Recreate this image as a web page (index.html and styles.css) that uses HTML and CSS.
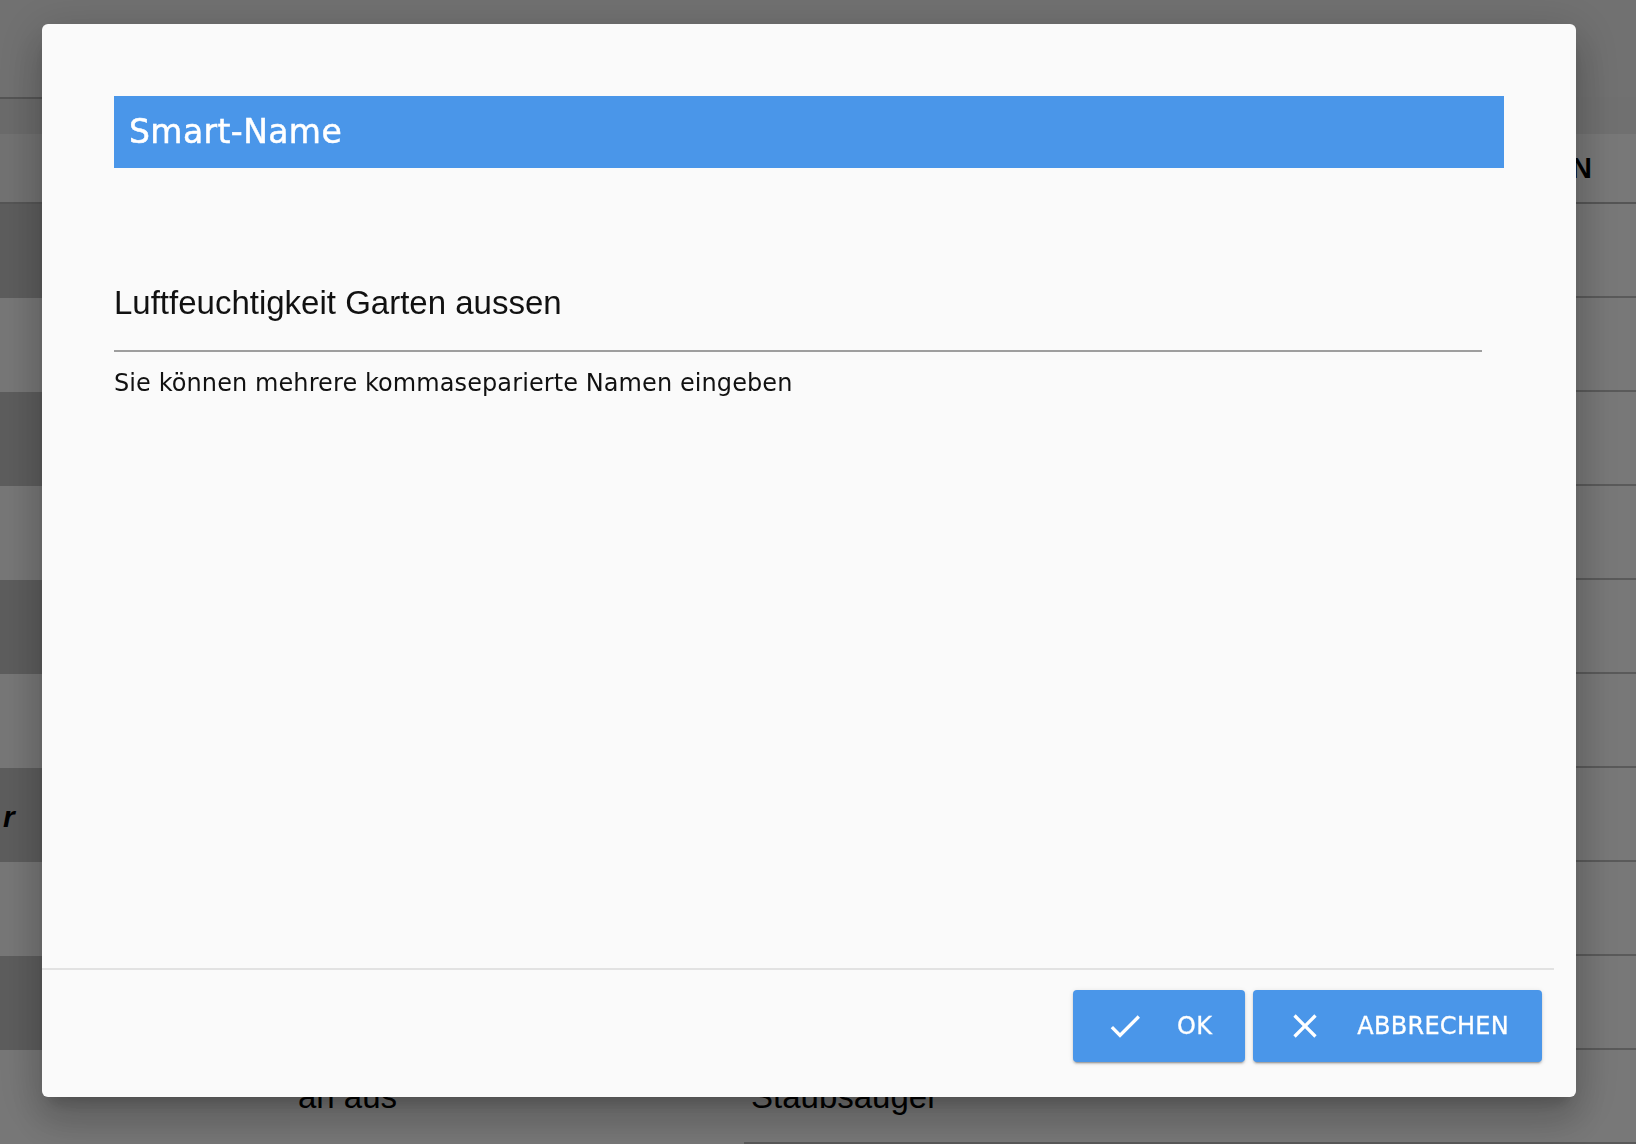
FILE: index.html
```html
<!DOCTYPE html>
<html lang="de">
<head>
<meta charset="utf-8">
<title>Smart-Name</title>
<link rel="stylesheet" href="styles.css">
</head>
<body>
<div class="page">
  <div class="appbar"></div>
  <div class="toolbar"><div class="tb-left"></div><div class="tb-right"></div></div>
  <div class="thead">
    <div class="th th-first"></div>
    <div class="th th-rest">SMART-NAMEN</div>
  </div>
  <div class="rows">
    <div class="row odd"><div class="c c1"></div><div class="c c2"></div><div class="c c3"></div><div class="c c4"></div></div>
    <div class="row"><div class="c c1"></div><div class="c c2"></div><div class="c c3"></div><div class="c c4"></div></div>
    <div class="row odd"><div class="c c1"></div><div class="c c2"></div><div class="c c3"></div><div class="c c4"></div></div>
    <div class="row"><div class="c c1"></div><div class="c c2"></div><div class="c c3"></div><div class="c c4"></div></div>
    <div class="row odd"><div class="c c1"></div><div class="c c2"></div><div class="c c3"></div><div class="c c4"></div></div>
    <div class="row"><div class="c c1"></div><div class="c c2"></div><div class="c c3"></div><div class="c c4"></div></div>
    <div class="row odd"><div class="c c1"><span class="group">r</span></div><div class="c c2"></div><div class="c c3"></div><div class="c c4"></div></div>
    <div class="row"><div class="c c1"></div><div class="c c2"></div><div class="c c3"></div><div class="c c4"></div></div>
    <div class="row odd"><div class="c c1"></div><div class="c c2"></div><div class="c c3"></div><div class="c c4"></div></div>
    <div class="row last"><div class="c c1"></div><div class="c c2 cell-text">an aus</div><div class="c c3 cell-text">Staubsauger</div><div class="c c4"></div></div>
  </div>
</div>

<div class="backdrop"></div>

<div class="dialog">
  <div class="dialog-body">
    <div class="dialog-title">Smart-Name</div>
    <div class="field">
      <div class="field-input">Luftfeuchtigkeit Garten aussen</div>
      <div class="field-helper">Sie können mehrere kommaseparierte Namen eingeben</div>
    </div>
  </div>
  <div class="dialog-divider"></div>
  <div class="dialog-actions">
    <button class="btn">
      <svg class="btn-icon" viewBox="0 0 24 24"><path d="M9 16.17L4.83 12l-1.42 1.41L9 19 21 7l-1.41-1.41z"/></svg>
      <span class="btn-label">OK</span>
    </button>
    <button class="btn">
      <svg class="btn-icon" viewBox="0 0 24 24"><path d="M19 6.41L17.59 5 12 10.59 6.41 5 5 6.41 10.59 12 5 17.59 6.41 19 12 13.41 17.59 19 19 17.59 13.41 12z"/></svg>
      <span class="btn-label">Abbrechen</span>
    </button>
  </div>
</div>
</body>
</html>
```
FILE: styles.css
```css
html, body {
  margin: 0;
  padding: 0;
  height: 100%;
  overflow: hidden;
}

body {
  font-family: "Liberation Sans", Arial, sans-serif;
  background: #eeeeee;
}

/* underlying page */
.page {
  width: 1636px;
  height: 1144px;
  display: flex;
  flex-direction: column;
}

.appbar {
  height: 98px;
  background: #e2e2e2;
}

.toolbar {
  height: 38px;
  display: flex;
}

.tb-left {
  width: 300px;
  background: #d6d6d6;
  border-top: 2px solid #aaaaaa;
}

.tb-right {
  flex: 1;
  background: #e0e0e0;
}

.thead {
  height: 68px;
  display: flex;
  border-bottom: 2px solid #ababab;
}

.th-first {
  width: 290px;
  background: #e4e4e4;
}

.th-rest {
  flex: 1;
  background: #f0f0f0;
  text-align: right;
  padding-right: 44px;
  font-family: "Liberation Sans", Arial, sans-serif;
  font-weight: bold;
  font-size: 29px;
  line-height: 68px;
  color: #000;
}

.rows {
  display: flex;
  flex-direction: column;
}

.row {
  height: 94px;
  display: flex;
}

.c {
  box-sizing: border-box;
  height: 94px;
  background: #f0f0f0;
  border-bottom: 2px solid #b4b4b4;
}

.c1 {
  width: 290px;
  background: #eeeeee;
  border-bottom: none;
}

.row.odd .c1 {
  background: #bababa;
}

.row.last .c1,
.row.last .c2 {
  border-bottom: none;
}

.c2 {
  width: 454px;
  padding-left: 8px;
}

.c3 {
  width: 500px;
  padding-left: 7px;
}

.c4 {
  flex: 1;
}

.group {
  display: block;
  padding-left: 3px;
  font-family: "Liberation Sans", Arial, sans-serif;
  font-weight: bold;
  font-style: italic;
  font-size: 30px;
  line-height: 98px;
  color: #000;
}

.cell-text {
  font-family: "Liberation Sans", Arial, sans-serif;
  font-size: 33px;
  color: #000;
  padding-top: 28px;
  line-height: 38px;
}

/* backdrop + dialog (overlay layer) */
.backdrop {
  position: fixed;
  inset: 0;
  background: rgba(0, 0, 0, 0.5);
}

.dialog {
  position: fixed;
  left: 42px;
  top: 24px;
  width: 1534px;
  height: 1073px;
  background: #fafafa;
  border-radius: 6px;
  box-shadow: 0 11px 15px -7px rgba(0,0,0,0.2), 0 24px 38px 3px rgba(0,0,0,0.14), 0 9px 46px 8px rgba(0,0,0,0.12);
  display: flex;
  flex-direction: column;
}

.dialog-body {
  flex: 1;
  padding: 72px 72px 0 72px;
  display: flex;
  flex-direction: column;
}

.dialog-title {
  height: 72px;
  background: #4a96e9;
  color: #ffffff;
  font-family: "DejaVu Sans", Verdana, sans-serif;
  font-size: 33px;
  letter-spacing: 0.4px;
  -webkit-text-stroke: 0.5px #ffffff;
  line-height: 72px;
  padding-left: 15px;
}

.field {
  margin-top: 116px;
  margin-right: 22px;
}

.field-input {
  font-family: "Liberation Sans", Arial, sans-serif;
  font-size: 33px;
  line-height: 38px;
  color: #111111;
  padding-bottom: 28px;
  border-bottom: 2px solid #9e9e9e;
}

.field-helper {
  margin-top: 17px;
  font-family: "DejaVu Sans", Verdana, sans-serif;
  font-size: 24px;
  letter-spacing: 0.09px;
  line-height: 28px;
  color: #111111;
}

.dialog-divider {
  height: 2px;
  background: #e2e2e2;
  margin-right: 22px;
}

.dialog-actions {
  display: flex;
  justify-content: flex-end;
  gap: 8px;
  padding: 20px 34px 35px 0;
}

.btn {
  height: 72px;
  display: flex;
  align-items: center;
  gap: 32px;
  padding: 0 33px 0 32px;
  border: none;
  border-radius: 4px;
  background: #4a96e9;
  color: #ffffff;
  box-shadow: 0 3px 1px -2px rgba(0,0,0,0.2), 0 2px 2px 0 rgba(0,0,0,0.14), 0 1px 5px 0 rgba(0,0,0,0.12);
  font-family: "DejaVu Sans", Verdana, sans-serif;
  font-size: 24px;
  letter-spacing: 0.3px;
  -webkit-text-stroke: 0.3px #ffffff;
  text-transform: uppercase;
  cursor: pointer;
}

.btn-icon {
  width: 40px;
  height: 40px;
  fill: #ffffff;
  flex: none;
}

.btn-label {
  line-height: 28px;
}
```
